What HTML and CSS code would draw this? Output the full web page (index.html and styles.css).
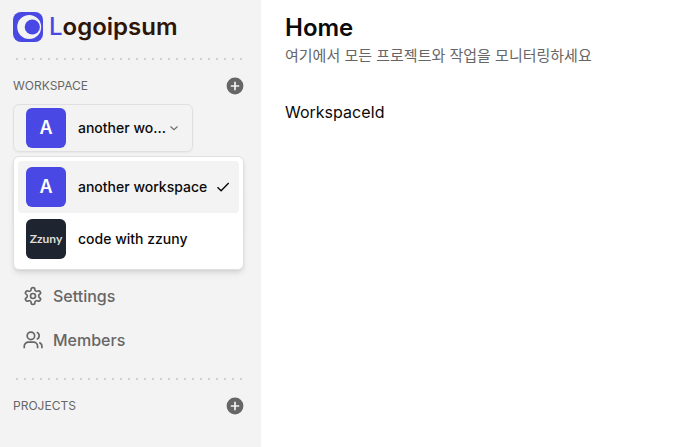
FILE: index.html
```
<!DOCTYPE html>
<html lang="ko">
<head>
    <meta charset="UTF-8">
    <meta name="viewport" content="width=device-width, initial-scale=1">
    <title>Home</title>
    <link rel="stylesheet" href="styles.css">
</head>
<body>
    <aside class="sidebar">
        <a class="logo" href="#">
            <svg class="logo-mark" viewBox="0 0 30 30" aria-hidden="true">
                <rect width="30" height="30" rx="8" fill="#4a48e4"/>
                <circle cx="16.2" cy="15" r="12" fill="#f3f3f3"/>
                <circle cx="19.3" cy="15" r="7.6" fill="#4a48e4"/>
            </svg>
            <span class="logo-text"><span class="logo-letter">L</span>ogoipsum</span>
        </a>

        <div class="separator"></div>

        <div class="section-header">
            <h2 class="section-title">WORKSPACE</h2>
            <button class="add-button" type="button" aria-label="Add workspace">
                <svg viewBox="0 0 20 20" aria-hidden="true">
                    <circle cx="10" cy="10" r="8.4" fill="#666"/>
                    <path d="M10 5.8v8.4M5.8 10h8.4" stroke="#f3f3f3" stroke-width="1.7"/>
                </svg>
            </button>
        </div>

        <div class="switcher">
            <button class="switcher-trigger" type="button" aria-haspopup="listbox" aria-expanded="true">
                <span class="avatar">A</span>
                <span class="switcher-name">another wo...</span>
                <svg class="chevron" viewBox="0 0 12 12" aria-hidden="true">
                    <path d="M2.5 4.5l3.5 3.3 3.5-3.3"/>
                </svg>
            </button>
            <div class="switcher-menu" role="listbox" aria-label="Workspaces">
                <button class="option selected" type="button" role="option" aria-selected="true">
                    <span class="avatar">A</span>
                    <span class="option-name">another workspace</span>
                    <svg class="check" viewBox="0 0 16 16" aria-hidden="true">
                        <path d="M2.5 8.2l3.6 3.6 7.6-7.9"/>
                    </svg>
                </button>
                <button class="option" type="button" role="option" aria-selected="false">
                    <span class="avatar avatar-dark">Zzuny</span>
                    <span class="option-name">code with zzuny</span>
                </button>
            </div>
        </div>

        <div class="separator"></div>

        <nav class="nav">
            <a class="nav-link active" href="#" aria-label="Home"></a>
            <a class="nav-link" href="#" aria-label="My Tasks"></a>
            <a class="nav-link" href="#">
                <svg class="nav-icon" viewBox="0 0 24 24" aria-hidden="true">
                    <path d="M12.22 2h-.44a2 2 0 0 0-2 2v.18a2 2 0 0 1-1 1.73l-.43.25a2 2 0 0 1-2 0l-.15-.08a2 2 0 0 0-2.73.73l-.22.38a2 2 0 0 0 .73 2.73l.15.1a2 2 0 0 1 1 1.72v.51a2 2 0 0 1-1 1.74l-.15.09a2 2 0 0 0-.73 2.73l.22.38a2 2 0 0 0 2.73.73l.15-.08a2 2 0 0 1 2 0l.43.25a2 2 0 0 1 1 1.73V20a2 2 0 0 0 2 2h.44a2 2 0 0 0 2-2v-.18a2 2 0 0 1 1-1.73l.43-.25a2 2 0 0 1 2 0l.15.08a2 2 0 0 0 2.73-.73l.22-.39a2 2 0 0 0-.73-2.73l-.15-.08a2 2 0 0 1-1-1.74v-.5a2 2 0 0 1 1-1.74l.15-.09a2 2 0 0 0 .73-2.73l-.22-.38a2 2 0 0 0-2.73-.73l-.15.08a2 2 0 0 1-2 0l-.43-.25a2 2 0 0 1-1-1.73V4a2 2 0 0 0-2-2z"/>
                    <circle cx="12" cy="12" r="3"/>
                </svg>
                Settings
            </a>
            <a class="nav-link" href="#">
                <svg class="nav-icon" viewBox="0 0 24 24" aria-hidden="true">
                    <circle cx="9.5" cy="7" r="4.5"/>
                    <path d="M1.5 22v-2.5a5 5 0 0 1 5-5h6a5 5 0 0 1 5 5V22M16.5 2.8a4.5 4.5 0 0 1 0 8.4M19.5 14.9a5 5 0 0 1 3.2 4.6V22"/>
                </svg>
                Members
            </a>
        </nav>

        <div class="separator"></div>

        <div class="section-header">
            <h2 class="section-title">PROJECTS</h2>
            <button class="add-button" type="button" aria-label="Add project">
                <svg viewBox="0 0 20 20" aria-hidden="true">
                    <circle cx="10" cy="10" r="8.4" fill="#666"/>
                    <path d="M10 5.8v8.4M5.8 10h8.4" stroke="#f3f3f3" stroke-width="1.7"/>
                </svg>
            </button>
        </div>
    </aside>

    <main class="content">
        <h1 class="page-title">Home</h1>
        <p class="page-subtitle">여기에서 모든 프로젝트와 작업을 모니터링하세요</p>
        <p class="page-body">WorkspaceId</p>
    </main>
</body>
</html>
```
FILE: styles.css
```
* {
    box-sizing: border-box;
}

body {
    display: flex;
    min-height: 100vh;
    margin: 0;
    background: #fff;
    color: #0a0a0a;
    font-family: 'Inter', 'Noto Sans CJK KR', sans-serif;
    font-size: 16px;
    line-height: 24px;
}

h1, h2, p {
    margin: 0;
}

button {
    padding: 0;
    border: none;
    background: none;
    color: inherit;
    font: inherit;
    text-align: left;
    cursor: pointer;
}

a {
    color: inherit;
    text-decoration: none;
}

svg {
    display: block;
    flex-shrink: 0;
}

/* Sidebar */
.sidebar {
    flex: 0 0 261px;
    padding: 12px 17px 12px 13px;
    background: #f3f3f3;
}

.logo {
    display: flex;
    align-items: center;
    gap: 6px;
}

.logo-mark {
    width: 30px;
    height: 30px;
}

.logo-text {
    color: #2e1506;
    font-size: 24px;
    font-weight: 600;
    line-height: 30px;
}

.logo-letter {
    color: #4a48e4;
    font-weight: 500;
}

.separator {
    height: 2px;
    margin: 16px 0 16px 3px;
    background: repeating-linear-gradient(to right, #d0d0d0 0 2px, transparent 2px 8px);
}

.section-header {
    display: flex;
    align-items: center;
    justify-content: space-between;
    height: 20px;
}

.section-title {
    color: #666;
    font-size: 12px;
    font-weight: 400;
    line-height: 20px;
}

.add-button {
    margin-right: -1px;
}

.add-button svg {
    width: 20px;
    height: 20px;
}

/* Workspace switcher */
.switcher {
    position: relative;
    margin-top: 8px;
}

.switcher-trigger {
    display: flex;
    align-items: center;
    width: 180px;
    padding: 3px 12px;
    border: 1px solid #e0e0e0;
    border-radius: 6px;
    box-shadow: 0 1px 2px rgba(0, 0, 0, 0.05);
    font-size: 14px;
    font-weight: 500;
}

.avatar {
    display: flex;
    flex: 0 0 40px;
    align-items: center;
    justify-content: center;
    height: 40px;
    margin-right: 12px;
    border-radius: 6px;
    background: #4a48e4;
    color: #fff;
    font-size: 18px;
    font-weight: 600;
}

.avatar-dark {
    background: #1e2430;
    color: #dddfd8;
    font-family: 'Lato', sans-serif;
    font-size: 12px;
    font-weight: 700;
}

.switcher-name {
    flex: 1;
    white-space: nowrap;
}

.chevron {
    width: 12px;
    height: 12px;
    fill: none;
    stroke: #707070;
    stroke-width: 1.2;
}

.switcher-menu {
    position: absolute;
    top: 100%;
    left: 0;
    right: 0;
    z-index: 10;
    margin-top: 4px;
    padding: 4px;
    border: 1px solid #e0e0e0;
    border-radius: 6px;
    background: #fff;
    box-shadow: 0 4px 6px -1px rgba(0, 0, 0, 0.1), 0 2px 4px -2px rgba(0, 0, 0, 0.1);
}

.option {
    display: flex;
    align-items: center;
    width: 100%;
    padding: 6px 8px;
    border-radius: 4px;
    font-size: 14px;
    font-weight: 500;
}

.option.selected {
    background: #f3f3f3;
}

.option-name {
    flex: 1;
    white-space: nowrap;
}

.check {
    width: 16px;
    height: 16px;
    fill: none;
    stroke: #0a0a0a;
    stroke-width: 1.4;
}

/* Navigation */
.nav-link {
    display: flex;
    align-items: center;
    gap: 10px;
    height: 44px;
    padding: 0 10px;
    border-radius: 6px;
    color: #666;
    font-weight: 500;
}

.nav-link.active {
    background: #fff;
    box-shadow: 0 1px 2px rgba(0, 0, 0, 0.05);
}

.nav-icon {
    width: 20px;
    height: 20px;
    fill: none;
    stroke: currentColor;
    stroke-width: 2;
}

/* Main content */
.content {
    flex: 1;
    padding: 12px 24px;
}

.page-title {
    font-size: 24px;
    font-weight: 600;
    line-height: 32px;
}

.page-subtitle {
    color: #666;
    font-size: 15px;
}

.page-body {
    margin-top: 32px;
}
```
